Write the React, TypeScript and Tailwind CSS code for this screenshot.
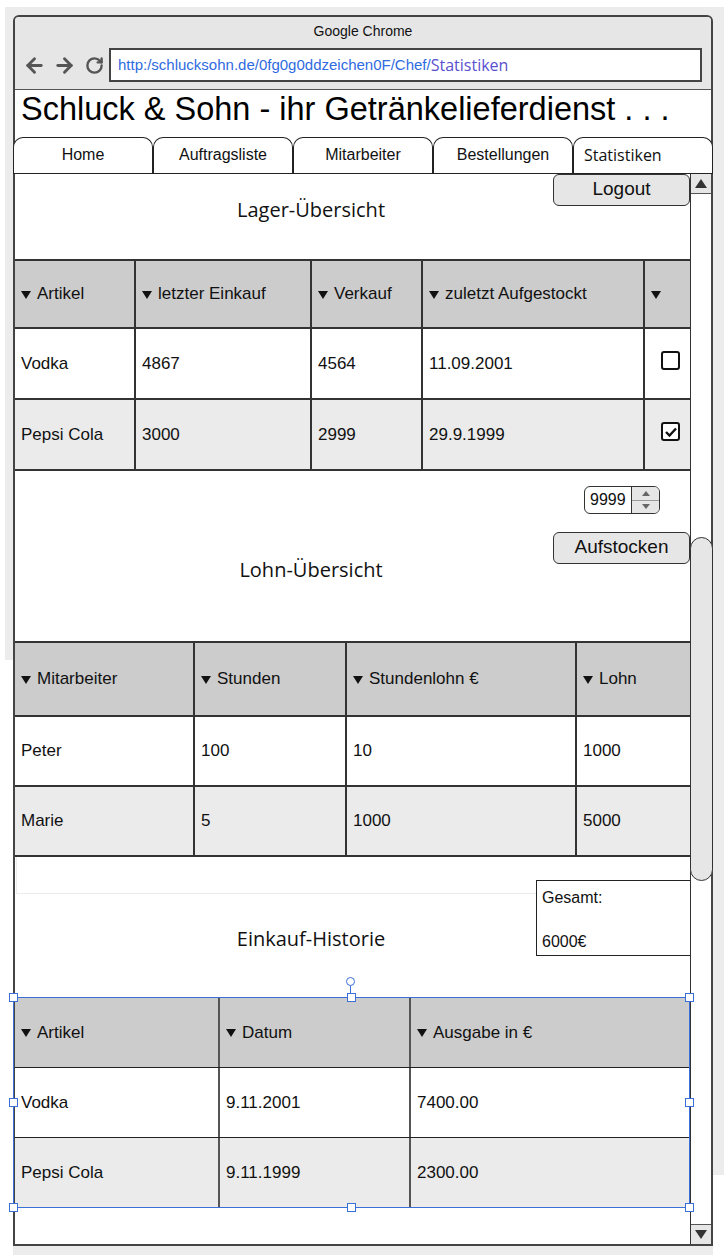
import { ArrowLeft, ArrowRight, RotateCw } from 'lucide-react';

const arial = "font-['Liberation_Sans',Arial,sans-serif]";
const segoe = "font-['Open_Sans','Noto_Sans',sans-serif]";

const Tri = () => (
  <svg width="10" height="9" viewBox="0 0 10 9" className="shrink-0">
    <polygon points="0,1 10,1 5,9" fill="#111" />
  </svg>
);

type TableProps = {
  cols: string;
  head: string[];
  rows: React.ReactNode[][];
  headH: string;
  rowH: string;
  thin?: boolean;
};

const Table = ({ cols, head, rows, headH, rowH, thin }: TableProps) => {
  const line = thin ? 'border-[#222]' : 'border-[#333]';
  const bw = thin ? 'border-b' : 'border-b-2';
  const rw = thin ? 'border-r-2 border-r-[#555]' : 'border-r-2 border-r-[#333]';
  return (
    <div className={`${thin ? 'border-t' : 'border-t-2'} ${line} ${arial} text-[17px] text-[#111]`}>
      <div className={`grid ${cols} ${headH} ${bw} ${line} bg-[#cccccc]`}>
        {head.map((h, i) => (
          <div
            key={i}
            className={`flex items-center gap-[6px] pl-[6px] ${i < head.length - 1 ? rw : ''}`}>
            <Tri />
            <span>{h}</span>
          </div>
        ))}
      </div>
      {rows.map((r, ri) => (
        <div
          key={ri}
          className={`grid ${cols} ${rowH} ${bw} ${line} ${ri % 2 ? 'bg-[#ebebeb]' : 'bg-white'}`}>
          {r.map((c, ci) => (
            <div
              key={ci}
              className={`flex items-center pl-[6px] ${ci < r.length - 1 ? rw : ''}`}>
              {c}
            </div>
          ))}
        </div>
      ))}
    </div>
  );
};

const Checkbox = ({ checked }: { checked?: boolean }) => (
  <div className="mx-auto mb-[6px] flex h-[19px] w-[19px] items-center justify-center rounded-[3px] border-2 border-[#111] bg-white">
    {checked && (
      <svg width="12" height="10" viewBox="0 0 12 10">
        <path d="M1 5 L4.5 8.5 L11 1.5" stroke="#111" strokeWidth="2.4" fill="none" />
      </svg>
    )}
  </div>
);

const Handle = ({ className }: { className: string }) => (
  <div className={`absolute h-[9px] w-[9px] border border-[#3b6fd8] bg-white ${className}`} />
);

export default function App() {
  return (
    <div className="relative h-[1260px] w-[724px] overflow-hidden bg-white">
      {/* backdrop left over from the mockup tool */}
      <div className="absolute left-[5px] top-[7px] h-[653px] w-[719px] bg-[#ececec]" />
      <div className="absolute left-[713px] top-[7px] h-[1168px] w-[11px] bg-[#ececec]" />
      <div className="absolute left-[13px] top-[1245px] h-[10px] w-[700px] bg-[#ececec]" />

      <div className="relative ml-[13px] mt-[15px] flex h-[1231px] w-[700px] flex-col rounded-t-[6px] border-2 border-[#444] bg-white">
        {/* title bar */}
        <div className="h-[73px] shrink-0 rounded-t-[4px] border-b border-[#555] bg-[#e6e6e6]">
          <div className={`pt-[4px] text-center text-[14px] text-[#111] ${arial}`}>Google Chrome</div>
          <div className="mt-[6px] flex items-center">
            <div className="flex items-center gap-[7px] pl-[8px] text-[#555]">
              <ArrowLeft size={23} strokeWidth={3} />
              <ArrowRight size={23} strokeWidth={3} />
              <RotateCw size={19} strokeWidth={3} className="ml-[2px]" />
            </div>
            <div className="ml-[5px] flex h-[34px] w-[593px] items-center border-2 border-[#444] bg-white pl-[7px]">
              <span className={`text-[15px] text-[#2f6be0] ${arial}`}>http:/schlucksohn.de/0fg0g0ddzeichen0F/Chef/</span>
              <span className={`text-[16px] text-[#5a4fd0] ${segoe}`}>Statistiken</span>
            </div>
          </div>
        </div>

        {/* page title */}
        <div className={`h-[47px] shrink-0 pl-[6px] text-[32.5px] leading-[38px] text-black ${arial}`}>
          Schluck &amp; Sohn - ihr Getränkelieferdienst . . .
        </div>

        {/* tabs */}
        <div className="-mx-[2px] flex h-[37px] shrink-0 border-b border-[#222]">
          {['Home', 'Auftragsliste', 'Mitarbeiter', 'Bestellungen'].map((t) => (
            <div
              key={t}
              className={`flex w-[140px] items-center justify-center rounded-t-[10px] border border-b-0 border-[#222] bg-white pb-[1px] text-[16px] text-[#111] ${arial}`}>
              {t}
            </div>
          ))}
          <div className={`flex w-[140px] items-center rounded-t-[10px] border border-b-0 border-[#222] bg-white pb-[1px] pl-[10px] text-[16px] text-[#111] ${segoe}`}>
            Statistiken
          </div>
        </div>

        {/* content */}
        <div className="flex min-h-0 flex-1">
          <div className="relative w-[675px]">
            <div className="flex h-[85px]">
              <div className={`flex-1 pl-[54px] pt-[21px] text-center text-[20px] text-[#111] ${segoe}`}>
                Lager-Übersicht
              </div>
              <button className={`h-[32px] w-[137px] rounded-[6px] border border-[#333] bg-[#e6e6e6] pb-[3px] text-[19px] text-[#111] ${arial}`}>
                Logout
              </button>
            </div>

            <Table
              cols="grid-cols-[121px_176px_111px_222px_1fr]"
              head={['Artikel', 'letzter Einkauf', 'Verkauf', 'zuletzt Aufgestockt', '']}
              headH="h-[68px]"
              rowH="h-[71px]"
              rows={[
                ['Vodka', '4867', '4564', '11.09.2001', <Checkbox />],
                ['Pepsi Cola', '3000', '2999', '29.9.1999', <Checkbox checked />],
              ]}
            />

            <div className="mt-[15px] flex justify-end pr-[30px]">
              <div className="flex h-[28px] w-[76px] overflow-hidden rounded-[6px] border border-[#333]">
                <div className={`flex flex-1 items-center pl-[5px] text-[16px] text-[#111] ${arial}`}>9999</div>
                <div className="flex w-[28px] flex-col border-l border-[#333] bg-[#e6e6e6]">
                  <div className="flex flex-1 items-center justify-center border-b border-[#999]">
                    <svg width="8" height="5" viewBox="0 0 8 5"><polygon points="0,5 8,5 4,0" fill="#666" /></svg>
                  </div>
                  <div className="flex flex-1 items-center justify-center">
                    <svg width="8" height="5" viewBox="0 0 8 5"><polygon points="0,0 8,0 4,5" fill="#666" /></svg>
                  </div>
                </div>
              </div>
            </div>

            <div className="mt-[18px] flex h-[109px]">
              <div className={`flex-1 pl-[54px] pt-[23px] text-center text-[20px] text-[#111] ${segoe}`}>
                Lohn-Übersicht
              </div>
              <button className={`h-[32px] w-[137px] rounded-[6px] border border-[#333] bg-[#e6e6e6] pb-[3px] text-[19px] text-[#111] ${arial}`}>
                Aufstocken
              </button>
            </div>

            <Table
              cols="grid-cols-[180px_152px_230px_1fr]"
              head={['Mitarbeiter', 'Stunden', 'Stundenlohn €', 'Lohn']}
              headH="h-[74px]"
              rowH="h-[70px]"
              rows={[
                ['Peter', '100', '10', '1000'],
                ['Marie', '5', '1000', '5000'],
              ]}
            />

            <div className="pointer-events-none absolute left-[1px] top-[683px] h-[37px] w-[674px] border-b border-l border-[#ececec]" />

            <div className="mt-[23px] flex h-[117px]">
              <div className={`flex-1 pl-[71px] pt-[44px] text-center text-[20px] text-[#111] ${segoe}`}>
                Einkauf-Historie
              </div>
              <div className={`relative flex h-[76px] w-[154px] flex-col justify-between border border-r-0 border-[#222] bg-white px-[5px] pb-[1px] pt-[5px] text-[16px] text-[#111] ${arial}`}>
                <span>Gesamt:</span>
                <span>6000€</span>
              </div>
            </div>

            <div className="relative">
              <Table
                thin
                cols="grid-cols-[205px_191px_1fr]"
                head={['Artikel', 'Datum', 'Ausgabe in €']}
                headH="h-[70px]"
                rowH="h-[70px]"
                rows={[
                  ['Vodka', '9.11.2001', '7400.00'],
                  ['Pepsi Cola', '9.11.1999', '2300.00'],
                ]}
              />
              {/* selection frame */}
              <div className="pointer-events-none absolute -left-[2px] top-0 bottom-0 right-0 border border-[#3b6fd8]" />
              <div className="absolute -top-[20px] left-[331px] flex flex-col items-center">
                <div className="h-[9px] w-[9px] rounded-full border border-[#3b6fd8] bg-white" />
                <div className="h-[11px] w-px bg-[#3b6fd8]" />
              </div>
              <Handle className="-left-[6px] -top-[4px]" />
              <Handle className="left-[332px] -top-[4px]" />
              <Handle className="-right-[4px] -top-[4px]" />
              <Handle className="-left-[6px] top-[101px]" />
              <Handle className="-right-[4px] top-[101px]" />
              <Handle className="-left-[6px] -bottom-[4px]" />
              <Handle className="left-[332px] -bottom-[4px]" />
              <Handle className="-right-[4px] -bottom-[4px]" />
            </div>
          </div>

          {/* scrollbar */}
          <div className="flex w-[21px] flex-col border-l border-[#333]">
            <div className="flex h-[20px] items-center justify-center border-b border-[#555] bg-[#e6e6e6]">
              <svg width="12" height="9" viewBox="0 0 12 9"><polygon points="0,9 12,9 6,0" fill="#333" /></svg>
            </div>
            <div className="-ml-[1px] -mr-[2px] mt-[343px] h-[344px] rounded-b-[14px] rounded-t-[14px] border border-[#333] bg-[#e6e6e6]" />
            <div className="flex-1" />
            <div className="flex h-[20px] items-center justify-center border-t border-[#555] bg-[#e6e6e6]">
              <svg width="12" height="9" viewBox="0 0 12 9"><polygon points="0,0 12,0 6,9" fill="#333" /></svg>
            </div>
          </div>
        </div>
      </div>
    </div>
  );
}
